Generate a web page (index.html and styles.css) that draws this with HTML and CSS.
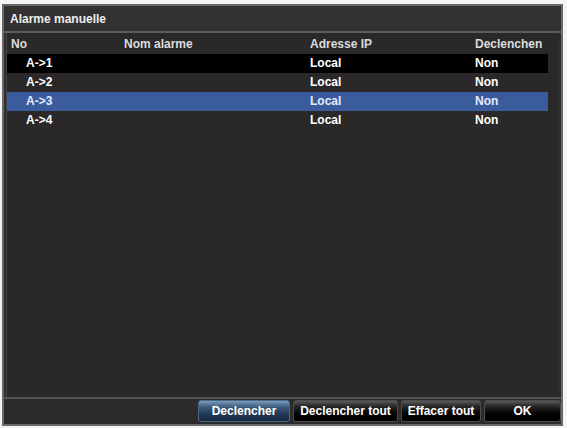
FILE: index.html
```html
<!DOCTYPE html>
<html>
<head>
<meta charset="utf-8">
<link rel="stylesheet" href="styles.css">
</head>
<body>
<div class="dialog">
  <div class="title">Alarme manuelle</div>
  <div class="list">
    <div class="row head">
      <span class="c1">No</span><span class="c2">Nom alarme</span><span class="c3">Adresse IP</span><span class="c4">Declenchen</span>
    </div>
    <div class="row item black">
      <span class="c1 idx">A-&gt;1</span><span class="c2"></span><span class="c3">Local</span><span class="c4">Non</span>
    </div>
    <div class="row item">
      <span class="c1 idx">A-&gt;2</span><span class="c2"></span><span class="c3">Local</span><span class="c4">Non</span>
    </div>
    <div class="row item selected">
      <span class="c1 idx">A-&gt;3</span><span class="c2"></span><span class="c3">Local</span><span class="c4">Non</span>
    </div>
    <div class="row item">
      <span class="c1 idx">A-&gt;4</span><span class="c2"></span><span class="c3">Local</span><span class="c4">Non</span>
    </div>
  </div>
  <div class="footer">
    <button class="btn blue w1">Declencher</button>
    <button class="btn w2">Declencher tout</button>
    <button class="btn w3">Effacer tout</button>
    <button class="btn w4">OK</button>
  </div>
</div>
</body>
</html>
```

FILE: styles.css
```css
html, body {
  margin: 0;
  padding: 0;
  background: #f4f4f4;
}
body {
  font-family: "Liberation Sans", Arial, sans-serif;
  font-weight: bold;
  font-size: 12px;
}
.dialog {
  box-sizing: border-box;
  width: 561px;
  height: 422px;
  margin: 4px 0 0 2px;
  border: 2px solid #6a6969;
  background: #302d2e;
  display: flex;
  flex-direction: column;
}
.title {
  height: 25px;
  line-height: 26px;
  padding-left: 6px;
  color: #eeeeee;
  background: #333031;
  border-bottom: 2px solid #5f5e5e;
}
.list {
  flex: 1;
  margin: 0 2px 0 2px;
  border-left: 1px solid #474445;
  background: #2b2829;
  padding-top: 0;
}
.row {
  display: flex;
  width: 541px;
  height: 19px;
  line-height: 19px;
  color: #ffffff;
}
.row.head {
  height: 21px;
  line-height: 22px;
  color: #dcdcdc;
}
.row span { display: block; white-space: nowrap; overflow: hidden; }
.c1 { width: 113px; padding-left: 4px; }
.c2 { width: 186px; }
.c3 { width: 165px; }
.c4 { flex: 1; }
.idx { padding-left: 19px; width: 98px; }
.black { background: #000000; }
.selected { background: #3b5c9c; color: #e4ecff; }
.footer {
  height: 24px;
  border-top: 2px solid #535151;
  background: #2c2a2a;
  display: flex;
  justify-content: flex-end;
  align-items: flex-start;
  gap: 3px;
  padding-top: 1px;
  padding-right: 0;
}
.btn {
  height: 22px;
  padding: 0;
  font-family: "Liberation Sans", Arial, sans-serif;
  font-weight: bold;
  font-size: 12px;
  color: #ffffff;
  border: 1px solid #4c4c4c;
  border-radius: 3px;
  background: linear-gradient(#5a5a5a 0%, #2a2a2a 25%, #050505 60%, #000000 100%);
}
.btn.blue {
  border-color: #4a6888;
  background: linear-gradient(#7a9cbc 0%, #3c5c7c 30%, #1e3550 70%, #1a2c40 100%);
}
.w1 { width: 92px; }
.w2 { width: 105px; }
.w3 { width: 80px; }
.w4 { width: 77px; }
```
